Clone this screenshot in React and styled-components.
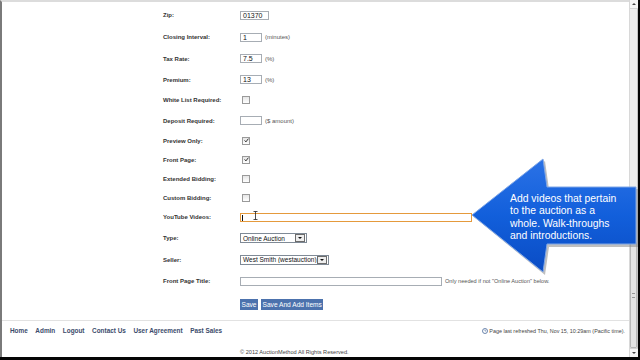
import React from 'react';
import styled, { createGlobalStyle } from 'styled-components';

const GlobalStyle = createGlobalStyle`
  html, body {
    margin: 0;
    padding: 0;
    background: #fff;
  }
  body {
    font-family: "Liberation Sans", Arial, sans-serif;
  }
`;

const Screen = styled.div`
  position: relative;
  width: 640px;
  height: 360px;
  overflow: hidden;
  display: flex;
  flex-direction: column;
  background: #000;
`;

const Window = styled.div`
  flex: 1;
  display: flex;
  min-height: 0;
`;

const Page = styled.div`
  flex: 1;
  display: flex;
  flex-direction: column;
  background: #fff;
  border-left: 2px solid #7a7a7a;
  border-top: 2px solid #dcdcdc;
  box-sizing: border-box;
`;

const BottomEdge = styled.div`
  height: 3px;
  background: #050505;
`;

const RightEdge = styled.div`
  width: 2px;
  background: #050505;
`;

const Scrollbar = styled.div`
  width: 8px;
  background: #eeeeee;
  border-left: 1px solid #d8d8d8;
  display: flex;
  flex-direction: column;
`;

const ScrollBtn = styled.div`
  height: 8px;
  display: flex;
  align-items: center;
  justify-content: center;
  background: #f4f4f4;
  border-bottom: ${p => (p.$down ? 'none' : '1px solid #d4d4d4')};
  border-top: ${p => (p.$down ? '1px solid #d4d4d4' : 'none')};
  &::after {
    content: '';
    border-left: 2px solid transparent;
    border-right: 2px solid transparent;
    ${p => (p.$down ? 'border-top: 2px solid #444;' : 'border-bottom: 2px solid #444;')}
  }
`;

const Track = styled.div`
  flex: 1;
  display: flex;
  flex-direction: column;
  justify-content: flex-end;
  border-right: 1px solid #c4c4c4;
`;

const Thumb = styled.div`
  height: 104px;
  background: #e4e4e4;
  border: 1px solid #b8b8b8;
  border-radius: 1px;
  display: flex;
  align-items: center;
  justify-content: center;
  &::after {
    content: '';
    width: 3px;
    height: 3px;
    border-top: 1px solid #999;
    border-bottom: 1px solid #999;
  }
`;

const Form = styled.div`
  padding: 2px 0 0 161px;
  display: flex;
  flex-direction: column;
`;

const Row = styled.div`
  height: ${p => p.$h}px;
  display: flex;
  align-items: center;
`;

const Label = styled.div`
  width: 77px;
  font-size: 6px;
  font-weight: bold;
  color: #333;
  white-space: nowrap;
`;

const Field = styled.div`
  display: flex;
  align-items: center;
  gap: 3px;
`;

const TextBox = styled.div`
  position: relative;
  width: ${p => p.$w}px;
  height: 9px;
  box-sizing: border-box;
  border: 1px solid ${p => (p.$focus ? '#e59a3c' : '#a7adb4')};
  background: #fff;
  font-size: 7px;
  line-height: 7px;
  padding-left: 2px;
  color: #111;
`;

const Caret = styled.span`
  position: absolute;
  left: 1px;
  top: 1px;
  width: 1px;
  height: 6px;
  background: #111;
`;

const Unit = styled.span`
  font-size: 6px;
  color: #555;
`;

const Note = styled.span`
  font-size: 5.6px;
  color: #555;
`;

const Check = styled.div`
  width: 6px;
  height: 6px;
  margin-left: 2px;
  border: 1px solid #9a9a9a;
  background: linear-gradient(#e6e6e6, #fff);
  display: flex;
  align-items: center;
  justify-content: center;
`;

const Select = styled.div`
  width: ${p => p.$w}px;
  height: 10px;
  box-sizing: border-box;
  border: 1px solid #7f8a96;
  display: flex;
  align-items: center;
  font-size: 6.5px;
  color: #111;
`;

const SelectText = styled.span`
  flex: 1;
  padding-left: 2px;
  white-space: nowrap;
  overflow: hidden;
`;

const DropBtn = styled.span`
  flex: none;
  width: 8px;
  height: 6px;
  margin-right: 1px;
  border: 1px solid #6c6c6c;
  background: #eee;
  display: flex;
  align-items: center;
  justify-content: center;
  &::after {
    content: '';
    border-left: 2px solid transparent;
    border-right: 2px solid transparent;
    border-top: 2px solid #111;
  }
`;

const Buttons = styled.div`
  display: flex;
  gap: 3px;
  margin-left: 77px;
`;

const Button = styled.div`
  height: 11px;
  padding: 0 1.5px;
  background: #4c72ad;
  color: #fff;
  font-size: 6.6px;
  line-height: 11px;
  white-space: nowrap;
`;

const Footer = styled.div`
  margin-top: 4px;
  border-top: 1px solid #e2e2e2;
  display: flex;
  flex-direction: column;
`;

const LinksRow = styled.div`
  height: 19px;
  display: flex;
  align-items: center;
  justify-content: space-between;
  padding: 0 4px 0 8px;
`;

const Links = styled.div`
  display: flex;
  gap: 7.6px;
`;

const FootLink = styled.span`
  font-size: 6.4px;
  font-weight: bold;
  color: #3b4b6b;
`;

const Refreshed = styled.div`
  display: flex;
  align-items: center;
  gap: 1px;
  font-size: 5.4px;
  color: #444;
`;

const Copyright = styled.div`
  margin-top: 9px;
  padding-left: 238px;
  font-size: 5.6px;
  color: #444;
`;

const Callout = styled.div`
  position: absolute;
  left: 0;
  top: 0;
  width: 640px;
  height: 360px;
  pointer-events: none;
`;

const CalloutText = styled.div`
  position: absolute;
  left: 510px;
  top: 193px;
  font-family: "Liberation Sans", Arial, sans-serif;
  font-size: 10.4px;
  line-height: 12.4px;
  color: #fff;
  white-space: nowrap;
`;

const IBeam = styled.svg`
  position: absolute;
  left: 253px;
  top: 211px;
`;

const Tick = () => (
  <svg width="5" height="5" viewBox="0 0 5 5">
    <path d="M0.6 2.4 L1.9 3.9 L4.4 0.7" fill="none" stroke="#333" strokeWidth="1" />
  </svg>
);

const Clock = () => (
  <svg width="6" height="6" viewBox="0 0 6 6">
    <circle cx="3" cy="3" r="2.5" fill="#fff" stroke="#4a6a9a" strokeWidth="0.8" />
    <path d="M3 1.5 V3 H4.2" fill="none" stroke="#4a6a9a" strokeWidth="0.6" />
  </svg>
);

const rows = [
  { label: 'Zip:', h: 22, kind: 'text', w: 29, value: '01370' },
  { label: 'Closing Interval:', h: 22, kind: 'text', w: 22, value: '1', unit: '(minutes)' },
  { label: 'Tax Rate:', h: 21, kind: 'text', w: 22, value: '7.5', unit: '(%)' },
  { label: 'Premium:', h: 21, kind: 'text', w: 22, value: '13', unit: '(%)' },
  { label: 'White List Required:', h: 20, kind: 'check' },
  { label: 'Deposit Required:', h: 21, kind: 'text', w: 22, value: '', unit: '($ amount)' },
  { label: 'Preview Only:', h: 19, kind: 'check', checked: true },
  { label: 'Front Page:', h: 19, kind: 'check', checked: true },
  { label: 'Extended Bidding:', h: 19, kind: 'check' },
  { label: 'Custom Bidding:', h: 19, kind: 'check' },
  { label: 'YouTube Videos:', h: 20, kind: 'text', w: 232, value: '', focus: true },
  { label: 'Type:', h: 22, kind: 'select', w: 67, value: 'Online Auction' },
  { label: 'Seller:', h: 21, kind: 'select', w: 89, value: 'West Smith (westauction)' },
  { label: 'Front Page Title:', h: 22, kind: 'text', w: 202, value: '', note: 'Only needed if not "Online Auction" below.' },
];

const links = ['Home', 'Admin', 'Logout', 'Contact Us', 'User Agreement', 'Past Sales'];

function FieldFor({ row }) {
  if (row.kind === 'check') {
    return <Check>{row.checked && <Tick />}</Check>;
  }
  if (row.kind === 'select') {
    return (
      <Select $w={row.w}>
        <SelectText>{row.value}</SelectText>
        <DropBtn />
      </Select>
    );
  }
  return (
    <Field>
      <TextBox $w={row.w} $focus={row.focus}>
        {row.focus && <Caret />}
        {row.value}
      </TextBox>
      {row.unit && <Unit>{row.unit}</Unit>}
      {row.note && <Note>{row.note}</Note>}
    </Field>
  );
}

export default function App() {
  return (
    <>
      <GlobalStyle />
      <Screen>
        <Window>
          <Page>
            <Form>
              {rows.map(r => (
                <Row key={r.label} $h={r.h}>
                  <Label>{r.label}</Label>
                  <FieldFor row={r} />
                </Row>
              ))}
              <Row $h={24}>
                <Buttons>
                  <Button>Save</Button>
                  <Button>Save And Add Items</Button>
                </Buttons>
              </Row>
            </Form>
            <Footer>
              <LinksRow>
                <Links>
                  {links.map(l => (
                    <FootLink key={l}>{l}</FootLink>
                  ))}
                </Links>
                <Refreshed>
                  <Clock />
                  Page last refreshed Thu, Nov 15, 10:29am (Pacific time).
                </Refreshed>
              </LinksRow>
              <Copyright>© 2012 AuctionMethod All Rights Reserved.</Copyright>
            </Footer>
          </Page>
          <Scrollbar>
            <ScrollBtn />
            <Track>
              <Thumb />
            </Track>
            <ScrollBtn $down />
          </Scrollbar>
          <RightEdge />
        </Window>
        <BottomEdge />

        <IBeam width="5" height="9" viewBox="0 0 5 9">
          <path d="M0.5 0.5 H4.5 M2.5 0.5 V8.5 M0.5 8.5 H4.5" stroke="#222" strokeWidth="0.8" fill="none" />
        </IBeam>

        <Callout>
          <svg width="640" height="360" viewBox="0 0 640 360">
            <defs>
              <linearGradient id="cg" x1="0" y1="0" x2="0" y2="1">
                <stop offset="0" stopColor="#2b72e6" />
                <stop offset="0.5" stopColor="#125fdb" />
                <stop offset="1" stopColor="#0a4cc4" />
              </linearGradient>
            </defs>
            <polygon
              points="474,217 545,161 549,189 638,189 638,247 549,247 545,275"
              fill="#8a8a8a"
              opacity="0.55"
            />
            <polygon
              points="472,215 543,159 547,187 636,187 636,244 547,244 543,272"
              fill="url(#cg)"
              stroke="#7fa6e6"
              strokeWidth="1"
            />
          </svg>
          <CalloutText>
            Add videos that pertain
            <br />
            to the auction as a
            <br />
            whole. Walk-throughs
            <br />
            and introductions.
          </CalloutText>
        </Callout>
      </Screen>
    </>
  );
}
